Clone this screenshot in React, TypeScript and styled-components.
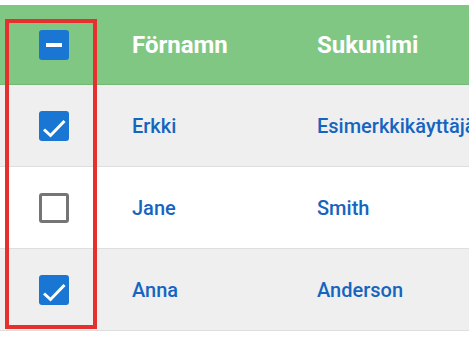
import React from "react";
import styled, { createGlobalStyle } from "styled-components";

const GlobalStyle = createGlobalStyle`
  html, body {
    margin: 0;
    padding: 0;
    background: #ffffff;
    font-family: Roboto, "Liberation Sans", Arial, sans-serif;
  }
  body {
    overflow: hidden;
  }
`;

const Page = styled.div`
  position: relative;
  width: 100vw;
  overflow: hidden;
  padding-top: 5px;
`;

const Table = styled.div`
  width: 720px;
`;

const Row = styled.div<{ $header?: boolean; $shade?: boolean }>`
  display: grid;
  grid-template-columns: 108px 185px 1fr;
  align-items: center;
  height: ${({ $header }) => ($header ? "80px" : "82px")};
  box-sizing: border-box;
  background: ${({ $header, $shade }) =>
    $header ? "#81c784" : $shade ? "#efefef" : "#ffffff"};
  border-bottom: 1px solid
    ${({ $header }) => ($header ? "#72b876" : "#dedede")};
`;

const CheckCell = styled.div`
  display: flex;
  justify-content: center;
  align-items: center;
`;

const HeadCell = styled.div`
  padding-left: 24px;
  color: #ffffff;
  font-size: 24px;
  font-weight: 700;
  white-space: nowrap;
`;

const Cell = styled.div`
  padding-left: 24px;
  color: #1565c0;
  font-size: 20px;
  font-weight: 500;
  white-space: nowrap;
`;

const Box = styled.div<{ $on: boolean }>`
  width: 30px;
  height: 30px;
  box-sizing: border-box;
  border-radius: 3px;
  background: ${({ $on }) => ($on ? "#1976d2" : "transparent")};
  border: ${({ $on }) => ($on ? "none" : "3px solid #757575")};
  display: flex;
  align-items: center;
  justify-content: center;
`;

const Dash = styled.div`
  width: 16px;
  height: 4px;
  background: #ffffff;
`;

const Highlight = styled.div`
  position: absolute;
  left: 5px;
  top: 19px;
  width: 92px;
  height: 310px;
  box-sizing: border-box;
  border: 4px solid #e53030;
  pointer-events: none;
`;

type BoxState = "checked" | "unchecked" | "indeterminate";

const Checkbox: React.FC<{ state: BoxState }> = ({ state }) => (
  <Box $on={state !== "unchecked"}>
    {state === "indeterminate" && <Dash />}
    {state === "checked" && (
      <svg width="30" height="30" viewBox="0 0 30 30">
        <polyline
          points="5,18.5 11.5,24.5 25.5,10"
          fill="none"
          stroke="#ffffff"
          strokeWidth="3"
        />
      </svg>
    )}
  </Box>
);

const people = [
  { first: "Erkki", last: "Esimerkkikäyttäjä", checked: true },
  { first: "Jane", last: "Smith", checked: false },
  { first: "Anna", last: "Anderson", checked: true },
];

export default function App() {
  return (
    <Page>
      <GlobalStyle />
      <Table>
        <Row $header>
          <CheckCell>
            <Checkbox state="indeterminate" />
          </CheckCell>
          <HeadCell>Förnamn</HeadCell>
          <HeadCell>Sukunimi</HeadCell>
        </Row>
        {people.map((p, i) => (
          <Row key={p.first} $shade={i % 2 === 0}>
            <CheckCell>
              <Checkbox state={p.checked ? "checked" : "unchecked"} />
            </CheckCell>
            <Cell>{p.first}</Cell>
            <Cell>{p.last}</Cell>
          </Row>
        ))}
      </Table>
      <Highlight />
    </Page>
  );
}
